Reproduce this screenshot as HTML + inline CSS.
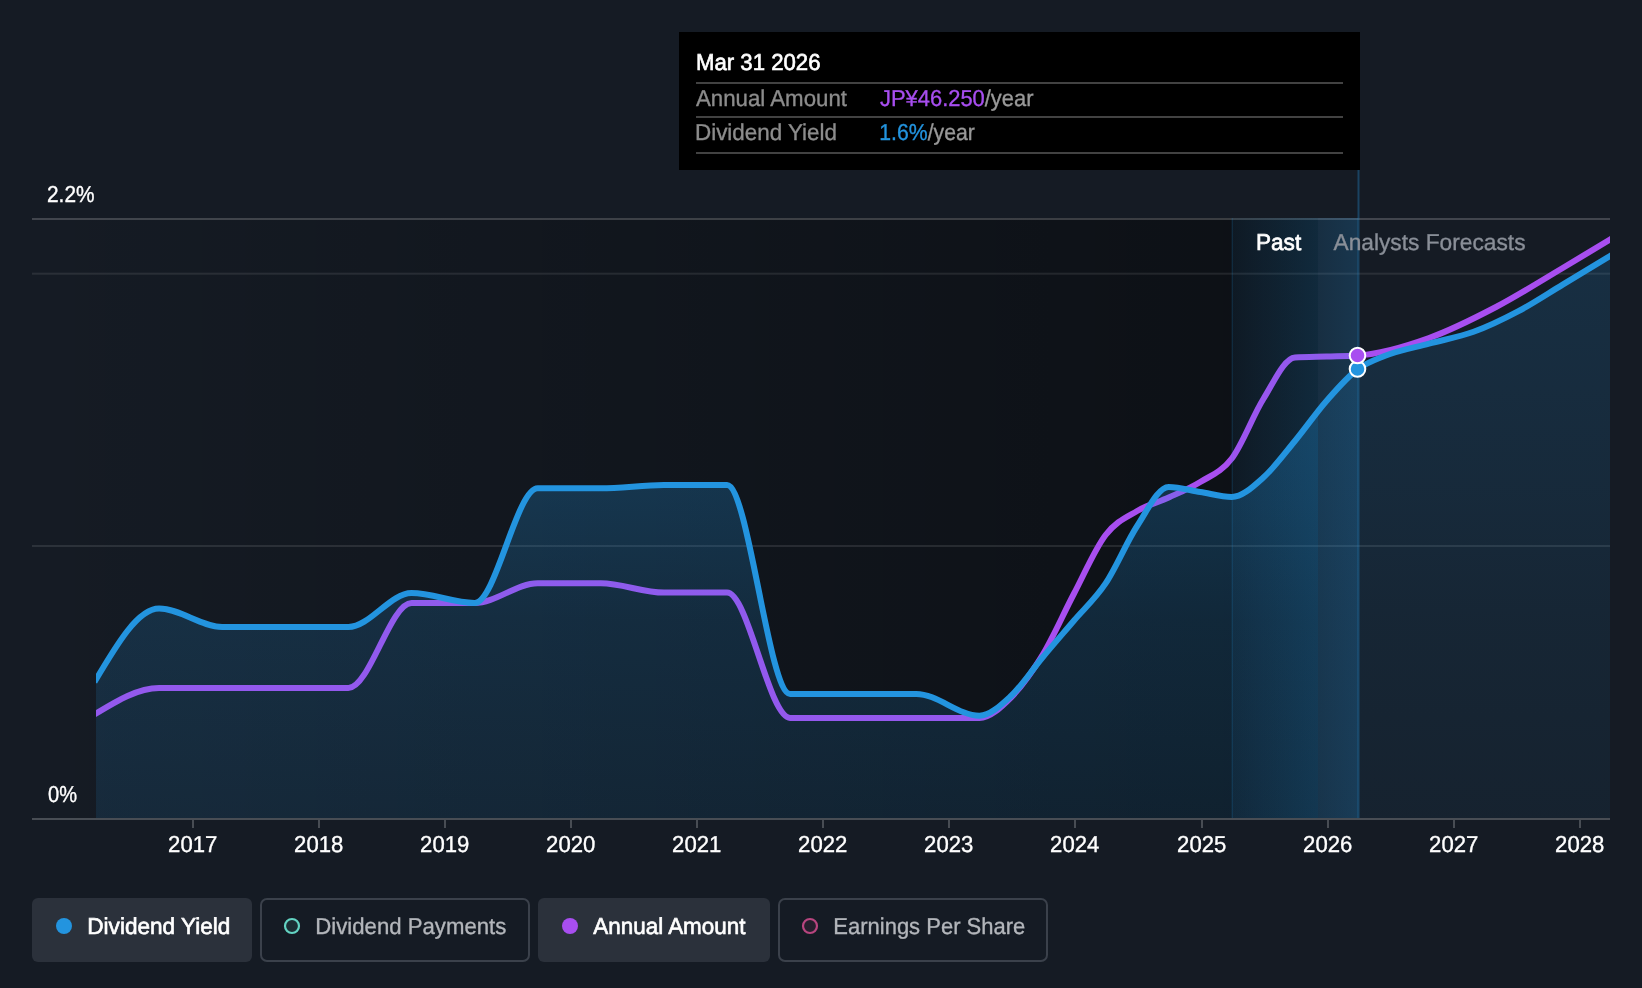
<!DOCTYPE html>
<html lang="en"><head><meta charset="utf-8"><title>Dividend chart</title>
<style>
html,body{margin:0;padding:0;background:#151b24;}
body{width:1642px;height:988px;overflow:hidden;font-family:"Liberation Sans",sans-serif;}
svg{display:block;will-change:transform;}
svg text{font-family:"Liberation Sans",sans-serif;text-rendering:geometricPrecision;}
</style></head><body>
<svg width="1642" height="988" viewBox="0 0 1642 988">
<defs>
<linearGradient id="pastg" x1="0" y1="0" x2="1" y2="0"><stop offset="0" stop-color="#000" stop-opacity="0"/><stop offset="1" stop-color="#000" stop-opacity="0.42"/></linearGradient>
<linearGradient id="hov" x1="0" y1="0" x2="1" y2="0"><stop offset="0" stop-color="#2394df" stop-opacity="0.07"/><stop offset="1" stop-color="#2394df" stop-opacity="0.195"/></linearGradient>
<linearGradient id="areag" gradientUnits="userSpaceOnUse" x1="0" y1="218" x2="0" y2="819"><stop offset="0" stop-color="#2394df" stop-opacity="0.36"/><stop offset="0.47" stop-color="#2394df" stop-opacity="0.245"/><stop offset="0.67" stop-color="#2394df" stop-opacity="0.175"/><stop offset="1" stop-color="#2394df" stop-opacity="0.125"/></linearGradient>
<clipPath id="plotclip"><rect x="96" y="170" width="1514" height="660"/></clipPath>
<clipPath id="pastclip"><rect x="96" y="170" width="1222" height="660"/></clipPath>
<clipPath id="futclip"><rect x="1318" y="170" width="292" height="660"/></clipPath>
<linearGradient id="areag2" gradientUnits="userSpaceOnUse" x1="0" y1="218" x2="0" y2="819"><stop offset="0" stop-color="#2394df" stop-opacity="0.17"/><stop offset="0.47" stop-color="#2394df" stop-opacity="0.12"/><stop offset="0.67" stop-color="#2394df" stop-opacity="0.088"/><stop offset="1" stop-color="#2394df" stop-opacity="0.06"/></linearGradient>
<linearGradient id="hov2" x1="0" y1="0" x2="1" y2="0"><stop offset="0" stop-color="#2394df" stop-opacity="0.16"/><stop offset="1" stop-color="#2394df" stop-opacity="0.225"/></linearGradient>
</defs>
<rect width="1642" height="988" fill="#151b24"/>
<!-- past shading -->
<rect x="32" y="218" width="1286" height="601" fill="url(#pastg)"/>
<!-- gridlines -->
<rect x="32" y="218" width="1578" height="2" fill="#fff" fill-opacity="0.19"/>
<rect x="32" y="272.7" width="1578" height="2" fill="#fff" fill-opacity="0.09"/>
<rect x="32" y="545" width="1578" height="2" fill="#fff" fill-opacity="0.10"/>
<!-- purple line (below area and hover, gets tinted) -->
<g clip-path="url(#plotclip)"><path d="M96.00,713.50C117.03,700.75 138.07,688.00 159.10,688.00C169.62,688.00 180.13,688.00 190.65,688.00C201.17,688.00 211.68,688.00 222.20,688.00C232.72,688.00 243.23,688.00 253.75,688.00C264.27,688.00 274.78,688.00 285.30,688.00C295.82,688.00 306.33,688.00 316.85,688.00C327.37,688.00 337.88,688.00 348.40,688.00C369.43,688.00 390.47,603.00 411.50,603.00C422.02,603.00 432.53,603.00 443.05,603.00C453.57,603.00 464.08,603.00 474.60,603.00C495.63,603.00 516.67,583.30 537.70,583.30C548.22,583.30 558.73,583.30 569.25,583.30C579.77,583.30 590.28,583.30 600.80,583.30C621.83,583.30 642.87,592.60 663.90,592.60C674.42,592.60 684.93,592.60 695.45,592.60C705.97,592.60 716.48,592.60 727.00,592.60C748.03,592.60 769.07,717.90 790.10,717.90C800.62,717.90 811.13,717.90 821.65,717.90C832.17,717.90 842.68,717.90 853.20,717.90C863.72,717.90 874.23,717.90 884.75,717.90C895.27,717.90 905.78,717.90 916.30,717.90C926.82,717.90 937.33,717.90 947.85,717.90C958.37,717.90 968.88,717.90 979.40,717.90C989.92,717.90 1000.43,707.98 1010.95,697.50C1021.47,687.02 1031.98,672.33 1042.50,655.00C1053.02,637.67 1063.53,613.50 1074.05,593.50C1084.57,573.50 1095.08,548.75 1105.60,535.00C1116.12,521.25 1126.63,517.25 1137.15,511.00C1147.67,504.75 1158.18,502.33 1168.70,497.50C1179.22,492.67 1189.73,488.50 1200.25,482.00C1210.77,475.50 1221.28,472.33 1231.80,458.50C1242.32,444.67 1252.83,415.83 1263.35,399.00C1273.87,382.17 1284.38,358.17 1294.90,357.50C1305.42,356.83 1315.93,356.83 1326.45,356.50C1336.97,356.17 1347.48,356.17 1358.00,355.50C1381.67,354.00 1405.33,346.47 1429.00,338.00C1451.33,330.01 1473.67,318.70 1496.00,307.00C1518.23,295.35 1540.47,281.20 1562.70,268.00C1578.47,258.64 1594.23,249.12 1610.00,239.60" fill="none" stroke="#a84ef0" stroke-width="6" stroke-linejoin="round" stroke-linecap="square"/></g>
<!-- area -->
<path d="M96.00,679.50C117.03,644.05 138.07,608.60 159.10,608.60C180.13,608.60 201.17,627.00 222.20,627.00C232.72,627.00 243.23,627.00 253.75,627.00C264.27,627.00 274.78,627.00 285.30,627.00C295.82,627.00 306.33,627.00 316.85,627.00C327.37,627.00 337.88,627.00 348.40,627.00C369.43,627.00 390.47,593.00 411.50,593.00C432.53,593.00 453.57,603.00 474.60,603.00C495.63,603.00 516.67,488.30 537.70,488.30C548.22,488.30 558.73,488.30 569.25,488.30C579.77,488.30 590.28,488.30 600.80,488.30C621.83,488.30 642.87,485.00 663.90,485.00C674.42,485.00 684.93,485.00 695.45,485.00C705.97,485.00 716.48,485.00 727.00,485.00C748.03,485.00 769.07,693.90 790.10,693.90C800.62,693.90 811.13,693.90 821.65,693.90C832.17,693.90 842.68,693.90 853.20,693.90C863.72,693.90 874.23,693.90 884.75,693.90C895.27,693.90 905.78,693.90 916.30,693.90C937.33,693.90 958.37,715.70 979.40,715.70C989.92,715.70 1000.43,705.70 1010.95,696.00C1021.47,686.30 1031.98,670.08 1042.50,657.50C1053.02,644.92 1063.53,632.85 1074.05,620.50C1084.57,608.15 1095.08,599.15 1105.60,583.40C1116.12,567.65 1126.63,542.07 1137.15,526.00C1147.67,509.93 1158.18,487.00 1168.70,487.00C1179.22,487.00 1189.73,490.33 1200.25,492.00C1210.77,493.67 1221.28,497.00 1231.80,497.00C1242.32,497.00 1252.83,486.83 1263.35,477.50C1273.87,468.17 1284.38,453.75 1294.90,441.00C1305.42,428.25 1315.93,413.00 1326.45,401.00C1336.97,389.00 1347.48,376.67 1358.00,369.00C1366.83,362.55 1375.67,359.63 1384.50,356.00C1399.33,349.90 1414.17,347.63 1429.00,343.60C1443.87,339.56 1458.73,337.19 1473.60,331.80C1488.40,326.44 1503.20,319.23 1518.00,311.40C1532.90,303.51 1547.80,293.57 1562.70,284.60C1578.47,275.11 1594.23,265.55 1610.00,256.00L1610,819L96,819Z" fill="url(#areag)" clip-path="url(#pastclip)"/>
<path d="M96.00,679.50C117.03,644.05 138.07,608.60 159.10,608.60C180.13,608.60 201.17,627.00 222.20,627.00C232.72,627.00 243.23,627.00 253.75,627.00C264.27,627.00 274.78,627.00 285.30,627.00C295.82,627.00 306.33,627.00 316.85,627.00C327.37,627.00 337.88,627.00 348.40,627.00C369.43,627.00 390.47,593.00 411.50,593.00C432.53,593.00 453.57,603.00 474.60,603.00C495.63,603.00 516.67,488.30 537.70,488.30C548.22,488.30 558.73,488.30 569.25,488.30C579.77,488.30 590.28,488.30 600.80,488.30C621.83,488.30 642.87,485.00 663.90,485.00C674.42,485.00 684.93,485.00 695.45,485.00C705.97,485.00 716.48,485.00 727.00,485.00C748.03,485.00 769.07,693.90 790.10,693.90C800.62,693.90 811.13,693.90 821.65,693.90C832.17,693.90 842.68,693.90 853.20,693.90C863.72,693.90 874.23,693.90 884.75,693.90C895.27,693.90 905.78,693.90 916.30,693.90C937.33,693.90 958.37,715.70 979.40,715.70C989.92,715.70 1000.43,705.70 1010.95,696.00C1021.47,686.30 1031.98,670.08 1042.50,657.50C1053.02,644.92 1063.53,632.85 1074.05,620.50C1084.57,608.15 1095.08,599.15 1105.60,583.40C1116.12,567.65 1126.63,542.07 1137.15,526.00C1147.67,509.93 1158.18,487.00 1168.70,487.00C1179.22,487.00 1189.73,490.33 1200.25,492.00C1210.77,493.67 1221.28,497.00 1231.80,497.00C1242.32,497.00 1252.83,486.83 1263.35,477.50C1273.87,468.17 1284.38,453.75 1294.90,441.00C1305.42,428.25 1315.93,413.00 1326.45,401.00C1336.97,389.00 1347.48,376.67 1358.00,369.00C1366.83,362.55 1375.67,359.63 1384.50,356.00C1399.33,349.90 1414.17,347.63 1429.00,343.60C1443.87,339.56 1458.73,337.19 1473.60,331.80C1488.40,326.44 1503.20,319.23 1518.00,311.40C1532.90,303.51 1547.80,293.57 1562.70,284.60C1578.47,275.11 1594.23,265.55 1610.00,256.00L1610,819L96,819Z" fill="url(#areag2)" clip-path="url(#futclip)"/>
<g clip-path="url(#plotclip)"><path d="M96.00,679.50C117.03,644.05 138.07,608.60 159.10,608.60C180.13,608.60 201.17,627.00 222.20,627.00C232.72,627.00 243.23,627.00 253.75,627.00C264.27,627.00 274.78,627.00 285.30,627.00C295.82,627.00 306.33,627.00 316.85,627.00C327.37,627.00 337.88,627.00 348.40,627.00C369.43,627.00 390.47,593.00 411.50,593.00C432.53,593.00 453.57,603.00 474.60,603.00C495.63,603.00 516.67,488.30 537.70,488.30C548.22,488.30 558.73,488.30 569.25,488.30C579.77,488.30 590.28,488.30 600.80,488.30C621.83,488.30 642.87,485.00 663.90,485.00C674.42,485.00 684.93,485.00 695.45,485.00C705.97,485.00 716.48,485.00 727.00,485.00C748.03,485.00 769.07,693.90 790.10,693.90C800.62,693.90 811.13,693.90 821.65,693.90C832.17,693.90 842.68,693.90 853.20,693.90C863.72,693.90 874.23,693.90 884.75,693.90C895.27,693.90 905.78,693.90 916.30,693.90C937.33,693.90 958.37,715.70 979.40,715.70C989.92,715.70 1000.43,705.70 1010.95,696.00C1021.47,686.30 1031.98,670.08 1042.50,657.50C1053.02,644.92 1063.53,632.85 1074.05,620.50C1084.57,608.15 1095.08,599.15 1105.60,583.40C1116.12,567.65 1126.63,542.07 1137.15,526.00C1147.67,509.93 1158.18,487.00 1168.70,487.00C1179.22,487.00 1189.73,490.33 1200.25,492.00C1210.77,493.67 1221.28,497.00 1231.80,497.00C1242.32,497.00 1252.83,486.83 1263.35,477.50C1273.87,468.17 1284.38,453.75 1294.90,441.00C1305.42,428.25 1315.93,413.00 1326.45,401.00C1336.97,389.00 1347.48,376.67 1358.00,369.00C1366.83,362.55 1375.67,359.63 1384.50,356.00C1399.33,349.90 1414.17,347.63 1429.00,343.60C1443.87,339.56 1458.73,337.19 1473.60,331.80C1488.40,326.44 1503.20,319.23 1518.00,311.40C1532.90,303.51 1547.80,293.57 1562.70,284.60C1578.47,275.11 1594.23,265.55 1610.00,256.00" fill="none" stroke="#2394df" stroke-width="6" stroke-linejoin="round" stroke-linecap="square"/></g>
<!-- hover band -->
<rect x="1232" y="218" width="86" height="601" fill="url(#hov)"/>
<rect x="1318" y="218" width="40" height="601" fill="url(#hov2)"/>
<rect x="1231.5" y="218" width="1.5" height="601" fill="#2394df" fill-opacity="0.15"/>
<rect x="1357.5" y="170" width="2" height="649" fill="#2394df" fill-opacity="0.33"/>
<!-- axis -->
<rect x="32" y="818" width="1578" height="2" fill="#484d54"/>

<rect x="192" y="820" width="2" height="8" fill="#484d54"/>
<text x="168.1" y="852" fill="#fff" font-size="23" font-weight="400" text-anchor="start" stroke="#fff" stroke-width="0.35" textLength="49.2" lengthAdjust="spacingAndGlyphs" >2017</text>
<rect x="318" y="820" width="2" height="8" fill="#484d54"/>
<text x="294.09999999999997" y="852" fill="#fff" font-size="23" font-weight="400" text-anchor="start" stroke="#fff" stroke-width="0.35" textLength="49.2" lengthAdjust="spacingAndGlyphs" >2018</text>
<rect x="444" y="820" width="2" height="8" fill="#484d54"/>
<text x="420.09999999999997" y="852" fill="#fff" font-size="23" font-weight="400" text-anchor="start" stroke="#fff" stroke-width="0.35" textLength="49.2" lengthAdjust="spacingAndGlyphs" >2019</text>
<rect x="570" y="820" width="2" height="8" fill="#484d54"/>
<text x="546.1" y="852" fill="#fff" font-size="23" font-weight="400" text-anchor="start" stroke="#fff" stroke-width="0.35" textLength="49.2" lengthAdjust="spacingAndGlyphs" >2020</text>
<rect x="696" y="820" width="2" height="8" fill="#484d54"/>
<text x="672.1" y="852" fill="#fff" font-size="23" font-weight="400" text-anchor="start" stroke="#fff" stroke-width="0.35" textLength="49.2" lengthAdjust="spacingAndGlyphs" >2021</text>
<rect x="822" y="820" width="2" height="8" fill="#484d54"/>
<text x="798.1" y="852" fill="#fff" font-size="23" font-weight="400" text-anchor="start" stroke="#fff" stroke-width="0.35" textLength="49.2" lengthAdjust="spacingAndGlyphs" >2022</text>
<rect x="948" y="820" width="2" height="8" fill="#484d54"/>
<text x="924.1" y="852" fill="#fff" font-size="23" font-weight="400" text-anchor="start" stroke="#fff" stroke-width="0.35" textLength="49.2" lengthAdjust="spacingAndGlyphs" >2023</text>
<rect x="1074" y="820" width="2" height="8" fill="#484d54"/>
<text x="1050.1000000000001" y="852" fill="#fff" font-size="23" font-weight="400" text-anchor="start" stroke="#fff" stroke-width="0.35" textLength="49.2" lengthAdjust="spacingAndGlyphs" >2024</text>
<rect x="1201" y="820" width="2" height="8" fill="#484d54"/>
<text x="1177.1000000000001" y="852" fill="#fff" font-size="23" font-weight="400" text-anchor="start" stroke="#fff" stroke-width="0.35" textLength="49.2" lengthAdjust="spacingAndGlyphs" >2025</text>
<rect x="1327" y="820" width="2" height="8" fill="#484d54"/>
<text x="1303.1000000000001" y="852" fill="#fff" font-size="23" font-weight="400" text-anchor="start" stroke="#fff" stroke-width="0.35" textLength="49.2" lengthAdjust="spacingAndGlyphs" >2026</text>
<rect x="1453" y="820" width="2" height="8" fill="#484d54"/>
<text x="1429.1000000000001" y="852" fill="#fff" font-size="23" font-weight="400" text-anchor="start" stroke="#fff" stroke-width="0.35" textLength="49.2" lengthAdjust="spacingAndGlyphs" >2027</text>
<rect x="1579" y="820" width="2" height="8" fill="#484d54"/>
<text x="1555.1000000000001" y="852" fill="#fff" font-size="23" font-weight="400" text-anchor="start" stroke="#fff" stroke-width="0.35" textLength="49.2" lengthAdjust="spacingAndGlyphs" >2028</text>
<text x="47" y="202" fill="#fff" font-size="23" font-weight="400" text-anchor="start" stroke="#fff" stroke-width="0.35" textLength="47.5" lengthAdjust="spacingAndGlyphs" >2.2%</text>
<text x="48" y="802" fill="#fff" font-size="23" font-weight="400" text-anchor="start" stroke="#fff" stroke-width="0.35" textLength="29" lengthAdjust="spacingAndGlyphs" >0%</text>
<text x="1256" y="250" fill="#fff" font-size="23" font-weight="400" text-anchor="start" textLength="45.2" lengthAdjust="spacingAndGlyphs" stroke="#fff" stroke-width="0.65">Past</text>
<text x="1333.5" y="250" fill="#8a8f98" font-size="23" font-weight="400" text-anchor="start" stroke="#8a8f98" stroke-width="0.35" textLength="192" lengthAdjust="spacingAndGlyphs" >Analysts Forecasts</text>
<circle cx="1357.5" cy="369" r="7.8" fill="#2394df" stroke="#fff" stroke-width="2"/>
<circle cx="1357.5" cy="355.5" r="7.8" fill="#a84ef0" stroke="#fff" stroke-width="2"/>
<rect x="679" y="32" width="681" height="138" fill="#000"/>
<text x="696" y="70" fill="#fff" font-size="23" font-weight="400" text-anchor="start" textLength="124.5" lengthAdjust="spacingAndGlyphs" stroke="#fff" stroke-width="0.65">Mar 31 2026</text>
<rect x="696" y="82" width="647" height="2" fill="#fff" fill-opacity="0.26"/>
<rect x="696" y="116" width="647" height="2" fill="#fff" fill-opacity="0.26"/>
<rect x="696" y="152" width="647" height="2" fill="#fff" fill-opacity="0.26"/>
<text x="696" y="106" fill="#8c8c8c" font-size="23" font-weight="400" text-anchor="start" stroke="#8c8c8c" stroke-width="0.35" textLength="151" lengthAdjust="spacingAndGlyphs" >Annual Amount</text>
<text x="880" y="106" font-size="23" textLength="153.5" lengthAdjust="spacingAndGlyphs"><tspan fill="#a84ef0" stroke="#a84ef0" stroke-width="0.35">JP¥46.250</tspan><tspan fill="#999999" stroke="#999999" stroke-width="0.35">/year</tspan></text>
<text x="695" y="140" fill="#8c8c8c" font-size="23" font-weight="400" text-anchor="start" stroke="#8c8c8c" stroke-width="0.35" textLength="142" lengthAdjust="spacingAndGlyphs" >Dividend Yield</text>
<text x="879.3" y="140" font-size="23" textLength="95.5" lengthAdjust="spacingAndGlyphs"><tspan fill="#2394df" stroke="#2394df" stroke-width="0.35">1.6%</tspan><tspan fill="#999999" stroke="#999999" stroke-width="0.35">/year</tspan></text>
<rect x="32" y="898" width="220" height="64" rx="6" fill="#2b313b"/><circle cx="64" cy="926" r="8" fill="#2394df"/><text x="87.3" y="934" fill="#fff" font-size="23" font-weight="400" text-anchor="start" textLength="143" lengthAdjust="spacingAndGlyphs" stroke="#fff" stroke-width="0.65">Dividend Yield</text>
<rect x="261" y="899" width="268" height="62" rx="6" fill="none" stroke="#3b414b" stroke-width="2"/><circle cx="292" cy="926" r="7" fill="#63d3c2" fill-opacity="0.10" stroke="#63d3c2" stroke-width="2.2"/><text x="315.3" y="934" fill="#b3b6bb" font-size="23" font-weight="400" text-anchor="start" stroke="#b3b6bb" stroke-width="0.35" textLength="191" lengthAdjust="spacingAndGlyphs" >Dividend Payments</text>
<rect x="538" y="898" width="232" height="64" rx="6" fill="#2b313b"/><circle cx="570" cy="926" r="8" fill="#a84ef0"/><text x="593.3" y="934" fill="#fff" font-size="23" font-weight="400" text-anchor="start" textLength="152.2" lengthAdjust="spacingAndGlyphs" stroke="#fff" stroke-width="0.65">Annual Amount</text>
<rect x="779" y="899" width="268" height="62" rx="6" fill="none" stroke="#3b414b" stroke-width="2"/><circle cx="810" cy="926" r="7" fill="#b8457f" fill-opacity="0.10" stroke="#b8457f" stroke-width="2.2"/><text x="833.3" y="934" fill="#b3b6bb" font-size="23" font-weight="400" text-anchor="start" stroke="#b3b6bb" stroke-width="0.35" textLength="192" lengthAdjust="spacingAndGlyphs" >Earnings Per Share</text>
</svg></body></html>
